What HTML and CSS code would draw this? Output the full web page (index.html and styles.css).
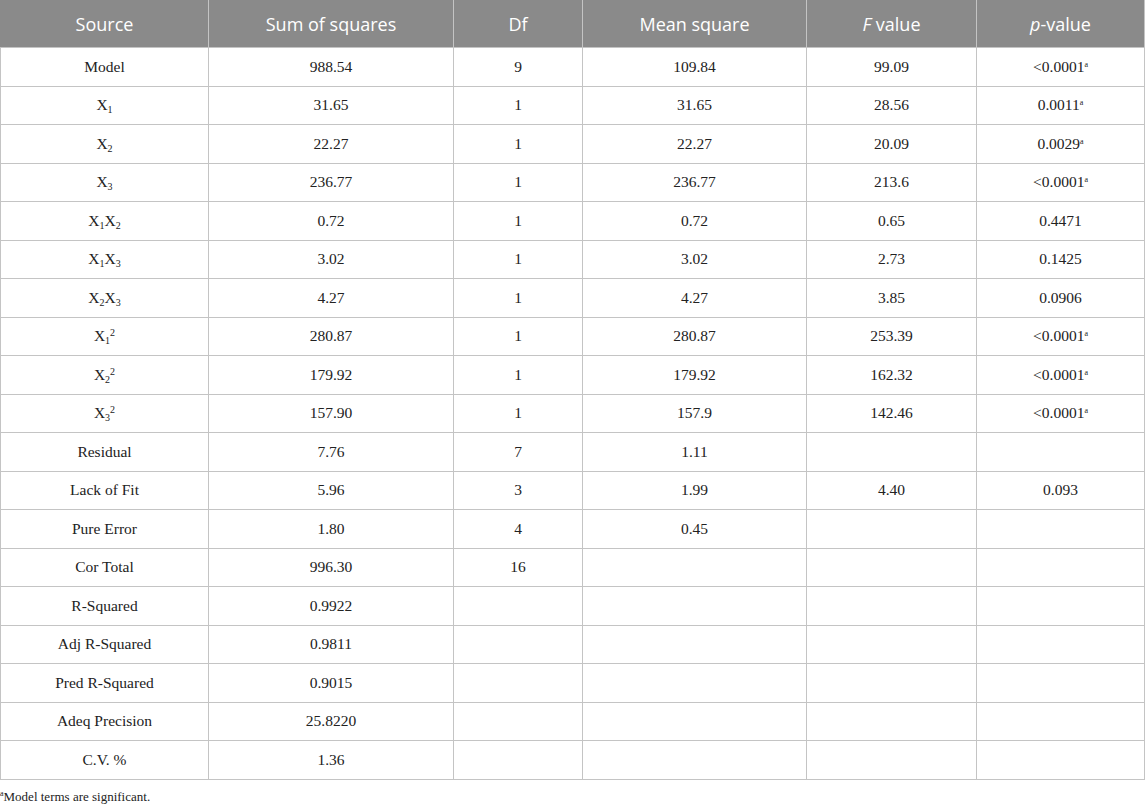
FILE: index.html
```html
<!DOCTYPE html>
<html>
<head>
<meta charset="utf-8">
<link rel="stylesheet" href="styles.css">
</head>
<body>
<table class="anova">
<thead>
<tr>
<th class="c1">Source</th>
<th class="c2">Sum of squares</th>
<th class="c3">Df</th>
<th class="c4">Mean square</th>
<th class="c5"><i>F</i> value</th>
<th class="c6"><i>p</i>-value</th>
</tr>
</thead>
<tbody>
<tr><td>Model</td><td>988.54</td><td>9</td><td>109.84</td><td>99.09</td><td>&lt;0.0001<sup class="fn">a</sup></td></tr>
<tr><td>X<sub>1</sub></td><td>31.65</td><td>1</td><td>31.65</td><td>28.56</td><td>0.0011<sup class="fn">a</sup></td></tr>
<tr><td>X<sub>2</sub></td><td>22.27</td><td>1</td><td>22.27</td><td>20.09</td><td>0.0029<sup class="fn">a</sup></td></tr>
<tr><td>X<sub>3</sub></td><td>236.77</td><td>1</td><td>236.77</td><td>213.6</td><td>&lt;0.0001<sup class="fn">a</sup></td></tr>
<tr><td>X<sub>1</sub>X<sub>2</sub></td><td>0.72</td><td>1</td><td>0.72</td><td>0.65</td><td>0.4471</td></tr>
<tr><td>X<sub>1</sub>X<sub>3</sub></td><td>3.02</td><td>1</td><td>3.02</td><td>2.73</td><td>0.1425</td></tr>
<tr><td>X<sub>2</sub>X<sub>3</sub></td><td>4.27</td><td>1</td><td>4.27</td><td>3.85</td><td>0.0906</td></tr>
<tr><td>X<sub>1</sub><sup>2</sup></td><td>280.87</td><td>1</td><td>280.87</td><td>253.39</td><td>&lt;0.0001<sup class="fn">a</sup></td></tr>
<tr><td>X<sub>2</sub><sup>2</sup></td><td>179.92</td><td>1</td><td>179.92</td><td>162.32</td><td>&lt;0.0001<sup class="fn">a</sup></td></tr>
<tr><td>X<sub>3</sub><sup>2</sup></td><td>157.90</td><td>1</td><td>157.9</td><td>142.46</td><td>&lt;0.0001<sup class="fn">a</sup></td></tr>
<tr><td>Residual</td><td>7.76</td><td>7</td><td>1.11</td><td></td><td></td></tr>
<tr><td>Lack of Fit</td><td>5.96</td><td>3</td><td>1.99</td><td>4.40</td><td>0.093</td></tr>
<tr><td>Pure Error</td><td>1.80</td><td>4</td><td>0.45</td><td></td><td></td></tr>
<tr><td>Cor Total</td><td>996.30</td><td>16</td><td></td><td></td><td></td></tr>
<tr><td>R-Squared</td><td>0.9922</td><td></td><td></td><td></td><td></td></tr>
<tr><td>Adj R-Squared</td><td>0.9811</td><td></td><td></td><td></td><td></td></tr>
<tr><td>Pred R-Squared</td><td>0.9015</td><td></td><td></td><td></td><td></td></tr>
<tr><td>Adeq Precision</td><td>25.8220</td><td></td><td></td><td></td><td></td></tr>
<tr><td>C.V. %</td><td>1.36</td><td></td><td></td><td></td><td></td></tr>
</tbody>
</table>
<p class="footnote"><sup class="fn">a</sup>Model terms are significant.</p>
</body>
</html>
```

FILE: styles.css
```css
html, body {
  margin: 0;
  padding: 0;
  background: #ffffff;
}

.anova {
  width: 1145px;
  border-collapse: collapse;
  table-layout: fixed;
  font-family: "Liberation Serif", "Times New Roman", serif;
  font-size: 15.5px;
  color: #222222;
}

.anova th {
  background: #8a8a8a;
  color: #ffffff;
  font-family: "Open Sans", "Noto Sans", sans-serif;
  font-weight: normal;
  font-size: 18px;
  height: 47px;
  padding: 0;
  border: 1px solid #c4c4c4;
  border-top: none;
  text-align: center;
  vertical-align: middle;
}

.anova th:first-child {
  border-left: 1px solid #8a8a8a;
}

.anova th.c1 { width: 207px; }
.anova th.c2 { width: 244px; }
.anova th.c3 { width: 128px; }
.anova th.c4 { width: 223px; }
.anova th.c5 { width: 169px; }
.anova th.c6 { width: auto; }

.anova td {
  height: 37.5px;
  padding: 0;
  border: 1px solid #c4c4c4;
  text-align: center;
  vertical-align: middle;
  line-height: 18px;
}

.anova sub {
  font-size: 10px;
  vertical-align: -3px;
  line-height: 0;
}

.anova sup {
  font-size: 10px;
  vertical-align: 5px;
  line-height: 0;
}

.anova sup.fn,
.footnote sup.fn {
  font-size: 8px;
  vertical-align: 5px;
  line-height: 0;
}

.footnote {
  margin: 10px 0 0 0;
  font-family: "Liberation Serif", "Times New Roman", serif;
  font-size: 13px;
  color: #222222;
  line-height: 14px;
}
```
